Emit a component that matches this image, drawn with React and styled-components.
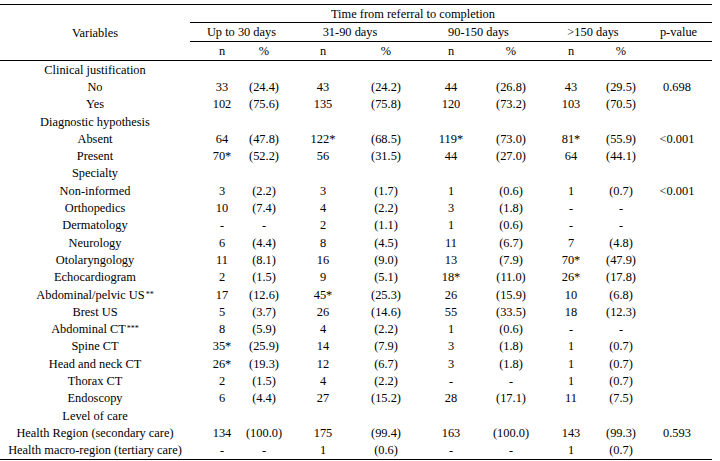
import React from "react";
import styled, { createGlobalStyle } from "styled-components";

const GlobalStyle = createGlobalStyle`
  html, body { margin: 0; padding: 0; background: #ffffff; }
  body { font-family: "Liberation Serif", "Times New Roman", serif; color: #000; }
`;

// column widths (px) and a small centering shift for each data column
const COLS = [
  { w: 53, s: 5.5 },
  { w: 50, s: -4 },
  { w: 61, s: -0.5 },
  { w: 64, s: 0 },
  { w: 63, s: 1.5 },
  { w: 60, s: 0 },
  { w: 55, s: 2.5 },
  { w: 53, s: -1.5 },
  { w: 63, s: -3.5 },
];
const TEMPLATE = `190px ${COLS.map((c) => c.w + "px").join(" ")}`;

const Page = styled.div`
  padding-top: 4px;
`;

const Table = styled.div`
  width: 712px;
  border-top: 1px solid #000;
  border-bottom: 1px solid #000;
  font-size: 12.4px;
  line-height: 14px;
`;

const Head = styled.div`
  display: grid;
  grid-template-columns: ${TEMPLATE};
  grid-template-rows: 18px 19px 18px;
  border-bottom: 1px solid #000;
`;

const HeadLabel = styled.div`
  grid-column: 1;
  grid-row: 1 / 4;
  display: flex;
  align-items: center;
  justify-content: center;
  padding-top: 1px;
`;

const HeadCell = styled.div`
  grid-column: ${(p) => p.$col};
  grid-row: ${(p) => p.$row};
  display: flex;
  align-items: center;
  justify-content: center;
  white-space: nowrap;
  box-sizing: border-box;
  border-bottom: ${(p) => (p.$line ? "1px solid #000" : "none")};
  padding-left: ${(p) => (p.$shift > 0 ? p.$shift * 2 : 0)}px;
  padding-right: ${(p) => (p.$shift < 0 ? -p.$shift * 2 : 0)}px;
`;

const Body = styled.div`
  display: grid;
  grid-template-columns: ${TEMPLATE};
  grid-auto-rows: 17.3px;
`;

const Label = styled.div`
  grid-column: 1;
  display: flex;
  align-items: center;
  justify-content: center;
  white-space: nowrap;
`;

const Cell = styled.div`
  display: flex;
  align-items: center;
  justify-content: center;
  white-space: nowrap;
  box-sizing: border-box;
  padding-left: ${(p) => (p.$shift > 0 ? p.$shift * 2 : 0)}px;
  padding-right: ${(p) => (p.$shift < 0 ? -p.$shift * 2 : 0)}px;
`;

const Sup = styled.sup`
  font-size: 8px;
  line-height: 0;
  vertical-align: 4px;
  margin-left: 1px;
`;

const rows = [
  { label: "Clinical justification" },
  { label: "No", v: ["33", "(24.4)", "43", "(24.2)", "44", "(26.8)", "43", "(29.5)", "0.698"] },
  { label: "Yes", v: ["102", "(75.6)", "135", "(75.8)", "120", "(73.2)", "103", "(70.5)", ""] },
  { label: "Diagnostic hypothesis" },
  { label: "Absent", v: ["64", "(47.8)", "122*", "(68.5)", "119*", "(73.0)", "81*", "(55.9)", "<0.001"] },
  { label: "Present", v: ["70*", "(52.2)", "56", "(31.5)", "44", "(27.0)", "64", "(44.1)", ""] },
  { label: "Specialty" },
  { label: "Non-informed", v: ["3", "(2.2)", "3", "(1.7)", "1", "(0.6)", "1", "(0.7)", "<0.001"] },
  { label: "Orthopedics", v: ["10", "(7.4)", "4", "(2.2)", "3", "(1.8)", "-", "-", ""] },
  { label: "Dermatology", v: ["-", "-", "2", "(1.1)", "1", "(0.6)", "-", "-", ""] },
  { label: "Neurology", v: ["6", "(4.4)", "8", "(4.5)", "11", "(6.7)", "7", "(4.8)", ""] },
  { label: "Otolaryngology", v: ["11", "(8.1)", "16", "(9.0)", "13", "(7.9)", "70*", "(47.9)", ""] },
  { label: "Echocardiogram", v: ["2", "(1.5)", "9", "(5.1)", "18*", "(11.0)", "26*", "(17.8)", ""] },
  { label: "Abdominal/pelvic US", sup: "**", v: ["17", "(12.6)", "45*", "(25.3)", "26", "(15.9)", "10", "(6.8)", ""] },
  { label: "Brest US", v: ["5", "(3.7)", "26", "(14.6)", "55", "(33.5)", "18", "(12.3)", ""] },
  { label: "Abdominal CT", sup: "***", v: ["8", "(5.9)", "4", "(2.2)", "1", "(0.6)", "-", "-", ""] },
  { label: "Spine CT", v: ["35*", "(25.9)", "14", "(7.9)", "3", "(1.8)", "1", "(0.7)", ""] },
  { label: "Head and neck CT", v: ["26*", "(19.3)", "12", "(6.7)", "3", "(1.8)", "1", "(0.7)", ""] },
  { label: "Thorax CT", v: ["2", "(1.5)", "4", "(2.2)", "-", "-", "1", "(0.7)", ""] },
  { label: "Endoscopy", v: ["6", "(4.4)", "27", "(15.2)", "28", "(17.1)", "11", "(7.5)", ""] },
  { label: "Level of care" },
  { label: "Health Region (secondary care)", v: ["134", "(100.0)", "175", "(99.4)", "163", "(100.0)", "143", "(99.3)", "0.593"] },
  { label: "Health macro-region (tertiary care)", v: ["-", "-", "1", "(0.6)", "-", "-", "1", "(0.7)", ""] },
];

const groups = [
  { text: "Up to 30 days", col: "2 / 4", shift: 0 },
  { text: "31-90 days", col: "4 / 6", shift: -5.5 },
  { text: "90-150 days", col: "6 / 8", shift: -1 },
  { text: ">150 days", col: "8 / 10", shift: -2 },
  { text: "p-value", col: "10 / 11", shift: -2 },
];

export default function App() {
  return (
    <>
      <GlobalStyle />
      <Page>
        <Table>
          <Head>
            <HeadLabel>Variables</HeadLabel>
            <HeadCell $col="2 / 11" $row={1} $line $shift={-38}>
              Time from referral to completion
            </HeadCell>
            {groups.map((g) => (
              <HeadCell key={g.text} $col={g.col} $row={2} $line $shift={g.shift}>
                {g.text}
              </HeadCell>
            ))}
            {COLS.slice(0, 8).map((c, i) => (
              <HeadCell key={i} $col={i + 2} $row={3} $shift={c.s}>
                {i % 2 === 0 ? "n" : "%"}
              </HeadCell>
            ))}
          </Head>
          <Body>
            {rows.map((r, ri) => (
              <React.Fragment key={ri}>
                <Label>
                  {r.label}
                  {r.sup && <Sup>{r.sup}</Sup>}
                </Label>
                {(r.v || Array(9).fill("")).map((val, ci) => (
                  <Cell key={ci} $shift={COLS[ci].s}>
                    {val}
                  </Cell>
                ))}
              </React.Fragment>
            ))}
          </Body>
        </Table>
      </Page>
    </>
  );
}
